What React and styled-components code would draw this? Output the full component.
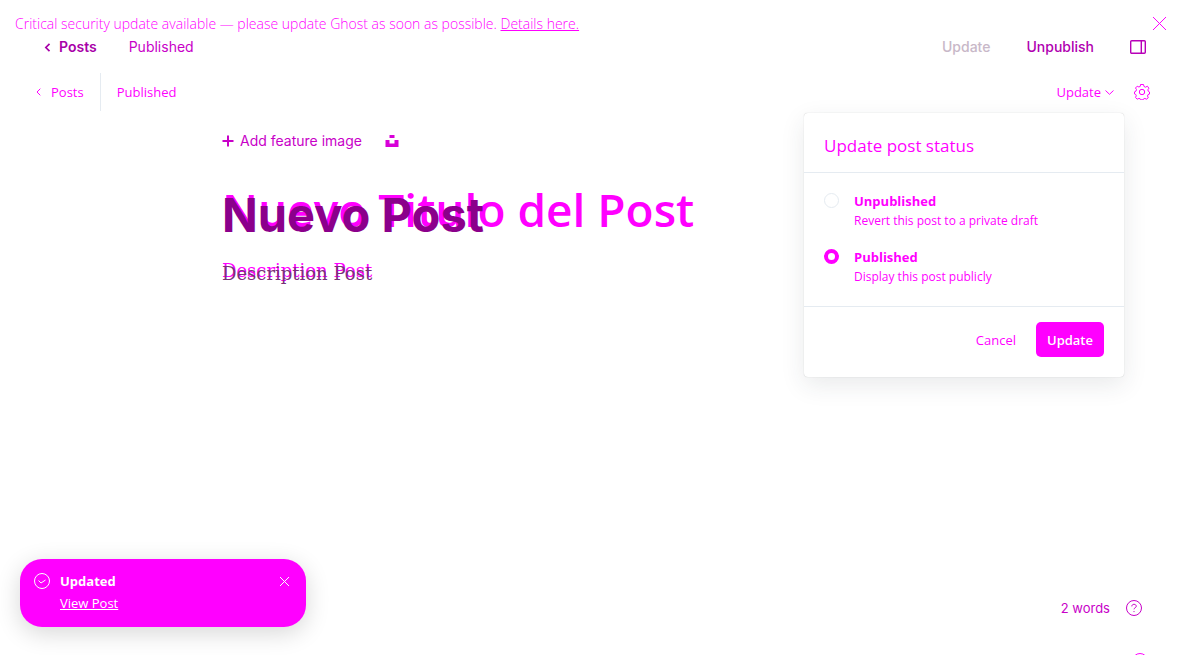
import React from "react";
import styled, { createGlobalStyle } from "styled-components";

const Global = createGlobalStyle`
  *, *::before, *::after { box-sizing: border-box; }
  body { margin: 0; background: #fff; font-family: Inter, sans-serif; color: #f0f; }
  h1, h2, p { margin: 0; }
  button { font: inherit; color: inherit; background: none; border: 0; padding: 0; }
  a { color: inherit; }
  svg { display: block; flex: none; }
`;

const system = `"Open Sans", "Noto Sans", sans-serif`;

const Page = styled.div`
  position: relative;
  min-height: 100vh;
  overflow: hidden;
  display: flex;
  flex-direction: column;
`;

const Banner = styled.div`
  display: flex;
  justify-content: space-between;
  align-items: flex-end;
  height: 34px;
  padding: 0 18px 0 15px;
  font: 300 14px/20px ${system};
`;

const CloseButton = styled.button`
  display: flex;
  padding: 4px 0;
`;

const Bar = styled.header`
  display: flex;
  align-items: center;
  justify-content: space-between;
  height: ${(p) => (p.$legacy ? 38 : 26)}px;
  margin-top: ${(p) => (p.$legacy ? 13 : 0)}px;
  padding: ${(p) => (p.$legacy ? "0 34px 0 36px" : "0 38px 0 44px")};
  font: ${(p) => (p.$legacy ? `400 13px/20px ${system}` : "400 14px/20px Inter, sans-serif")};
  color: ${(p) => (p.$legacy ? "#f0f" : "#c800c8")};
`;

const Group = styled.div`
  display: flex;
  align-items: center;
  gap: ${(p) => p.$gap}px;
`;

const BackLink = styled.a`
  display: flex;
  align-items: center;
  gap: ${(p) => (p.$strong ? 8 : 10)}px;
  text-decoration: none;
  font-weight: ${(p) => (p.$strong ? 600 : 400)};
  color: ${(p) => (p.$strong ? "#a800a8" : "inherit")};
`;

const Divider = styled.span`
  width: 1px;
  height: 38px;
  background: #e5ebf1;
`;

const BarButton = styled.button`
  display: flex;
  align-items: center;
  gap: 4px;
  font-weight: ${(p) => (p.$strong ? 500 : 400)};
  color: ${(p) => p.$color || "inherit"};
`;

const Editor = styled.main`
  display: flex;
  flex-direction: column;
  width: 740px;
  max-width: 100%;
  margin: 20px auto 0;
`;

const FeatureRow = styled.div`
  display: flex;
  align-items: center;
  gap: 23px;
  height: 20px;
  font: 400 14px/20px Inter, sans-serif;
  color: #c800c8;
`;

const FeatureButton = styled.button`
  display: flex;
  align-items: center;
  gap: 6px;
`;

const Layers = styled.div`
  display: grid;
  margin-top: ${(p) => p.$top}px;
  & > * { grid-area: 1 / 1; }
`;

const Title = styled.h1`
  font: 600 46px/56px ${system};
`;

const TitleFront = styled.h1`
  padding-top: 4px;
  font: 700 47px/60px Inter, sans-serif;
  color: #8b008b;
`;

const Excerpt = styled.p`
  font: 400 18px/28px "DejaVu Serif", serif;
  padding-top: ${(p) => (p.$front ? 3 : 0)}px;
  color: ${(p) => (p.$front ? "#7a307a" : "#f0f")};
`;

const Panel = styled.form`
  position: absolute;
  top: 113px;
  right: 60px;
  width: 320px;
  border-radius: 4px;
  background: #fff;
  box-shadow: 0 0 1px rgba(0, 0, 0, 0.25), 0 8px 24px rgba(40, 50, 60, 0.1);
  font-family: ${system};
`;

const PanelTitle = styled.h2`
  padding: 20px 20px 13px;
  font: 400 17px/26px ${system};
  border-bottom: 1px solid #e5ebf1;
`;

const Options = styled.div`
  display: flex;
  flex-direction: column;
  gap: 16px;
  padding: 18px 20px 19px;
  border-bottom: 1px solid #e5ebf1;
`;

const Option = styled.label`
  display: flex;
  gap: 15px;
`;

const Radio = styled.input`
  appearance: none;
  width: 15px;
  height: 15px;
  margin: 2px 0 0;
  border-radius: 50%;
  border: 1px solid #e5ebf1;
  &:checked { border: 4px solid #f0f; }
`;

const OptionText = styled.span`
  display: flex;
  flex-direction: column;
  font-size: 12px;
  line-height: 20px;
  font-weight: 400;
`;

const OptionName = styled.strong`
  font-size: 13px;
  font-weight: 700;
`;

const Actions = styled.div`
  display: flex;
  justify-content: flex-end;
  align-items: center;
  gap: 20px;
  padding: 15px 20px 20px;
  font: 400 13px/20px ${system};
`;

const Primary = styled.button`
  width: 68px;
  height: 35px;
  border-radius: 5px;
  background: #f0f;
  color: #fff;
  font-weight: 600;
`;

const Toast = styled.aside`
  position: absolute;
  left: 20px;
  bottom: 28px;
  width: 286px;
  height: 68px;
  padding: 12px 17px 12px 14px;
  display: flex;
  align-items: flex-start;
  gap: 10px;
  border-radius: 22px;
  background: #f0f;
  color: #fff;
  font: 400 13px/20px ${system};
  box-shadow: 0 6px 24px rgba(0, 0, 0, 0.16);
`;

const ToastIcon = styled.span`
  padding-top: 2px;
`;

const ToastText = styled.div`
  flex: 1;
  display: flex;
  flex-direction: column;
  align-items: flex-start;
  gap: 2px;
`;

const Dismiss = styled(CloseButton)`
  padding: 6px 0;
`;

const Status = styled.footer`
  display: flex;
  flex-direction: column;
  align-items: flex-end;
  gap: 36px;
  height: 56px;
  margin-top: auto;
  padding-right: 36px;
  overflow: hidden;
  font: 400 13px/18px Inter, sans-serif;
  color: #c800c8;
`;

const WordCount = styled(Group)`
  padding-right: 6px;
`;

const Cross = ({ size, color = "#f0f" }) => (
  <svg width={size} height={size} viewBox={`0 0 ${size} ${size}`} fill="none" stroke={color} shapeRendering="crispEdges"><path d={`M0 0L${size} ${size}M${size} 0L0 ${size}`} /></svg>
);
const Chevron = ({ width = 5, height = 8, stroke = 1 }) => (
  <svg width={width} height={height} viewBox="0 0 5 8" fill="none" stroke="currentColor" strokeWidth={stroke}><path d="M4.3.7L1 4l3.3 3.3" /></svg>
);
const Help = ({ color = "#c800c8" }) => (
  <svg width="16" height="16" viewBox="0 0 16 16" fill="none" stroke={color}><circle cx="8" cy="8" r="7.5" /><path d="M5.8 6.4c0-1.3.9-2.1 2.2-2.1s2.3.8 2.3 2S8 7.9 8 9.3M8 11v1.1" /></svg>
);

export default function App() {
  return (
    <Page>
      <Global />
      <Banner role="alert">
        <span>Critical security update available — please update Ghost as soon as possible. <a href="#details">Details here.</a></span>
        <CloseButton aria-label="Close alert"><Cross size={13} /></CloseButton>
      </Banner>
      <Bar>
        <Group $gap={32}>
          <BackLink href="#posts" $strong><Chevron width={7} height={9} stroke={1.5} />Posts</BackLink>
          <span>Published</span>
        </Group>
        <Group $gap={36}>
          <BarButton $strong $color="#c8b8c8">Update</BarButton>
          <BarButton $strong $color="#b000b0">Unpublish</BarButton>
          <BarButton aria-label="Toggle settings">
            <svg width="16" height="14" viewBox="0 0 16 14" fill="none" stroke="#b800b8" strokeWidth="1.4"><rect x=".7" y=".7" width="14.6" height="12.6" rx="1" /><path d="M11.3 1v12" /></svg>
          </BarButton>
        </Group>
      </Bar>
      <Bar $legacy>
        <Group $gap={16}>
          <BackLink href="#posts"><Chevron />Posts</BackLink>
          <Divider />
          <span>Published</span>
        </Group>
        <Group $gap={20}>
          <BarButton>Update<svg width="9" height="5" viewBox="0 0 9 5" fill="none" stroke="#f0f"><path d="M.5.5l4 3.8 4-3.8" /></svg></BarButton>
          <BarButton aria-label="Settings">
            <svg width="16" height="16" viewBox="0 0 16 16" fill="none" stroke="#f0f"><circle cx="8" cy="8" r="2.7" /><path d="M6.5.5h3l.5 2 1.5.7 1.9-1 1.5 2-1 1.6.3 1.4 1.3.8v2l-1.5.6-.5 1.4.8 1.7-1.9 1.5-1.5-.8-1.4.5-.5 1h-2l-.7-1-1.4-.5-1.7.8-1.7-1.8.8-1.6-.5-1.3-1.3-.6v-2l1.5-.8.5-1.5-1-1.6 1.7-1.8 1.7.8 1.4-.7z" /></svg>
          </BarButton>
        </Group>
      </Bar>
      <Editor>
        <FeatureRow>
          <FeatureButton><svg width="12" height="12" viewBox="0 0 12 12" stroke="currentColor" strokeWidth="2"><path d="M6 .5v11M.5 6h11" /></svg>Add feature image</FeatureButton>
          <FeatureButton aria-label="Unsplash"><svg width="14" height="14" viewBox="0 0 14 14" fill="#d800d8"><path d="M4.5 1h5v3h-5zM.5 6h4v3.500h5V6h4v7H.5z" /></svg></FeatureButton>
        </FeatureRow>
        <Layers $top={30}>
          <Title>Nuevo Titulo del Post</Title>
          <TitleFront>Nuevo Post</TitleFront>
        </Layers>
        <Layers $top={12}>
          <Excerpt>Description Post</Excerpt>
          <Excerpt $front>Description Post</Excerpt>
        </Layers>
      </Editor>
      <Panel onSubmit={(e) => e.preventDefault()}>
        <PanelTitle>Update post status</PanelTitle>
        <Options>
          <Option><Radio type="radio" name="status" /><OptionText><OptionName>Unpublished</OptionName>Revert this post to a private draft</OptionText></Option>
          <Option><Radio type="radio" name="status" defaultChecked /><OptionText><OptionName>Published</OptionName>Display this post publicly</OptionText></Option>
        </Options>
        <Actions><button type="button">Cancel</button><Primary>Update</Primary></Actions>
      </Panel>
      <Toast>
        <ToastIcon><svg width="16" height="16" viewBox="0 0 16 16" fill="none" stroke="#fff"><circle cx="8" cy="8" r="7.5" /><path d="M4.5 7.5L7 10l4.500-3" /></svg></ToastIcon>
        <ToastText><strong>Updated</strong><a href="#view">View Post</a></ToastText>
        <Dismiss aria-label="Dismiss"><Cross size={9} color="#fff" /></Dismiss>
      </Toast>
      <Status>
        <WordCount $gap={16}><span>2 words</span><Help /></WordCount>
        <Help color="#f0f" />
      </Status>
    </Page>
  );
}
